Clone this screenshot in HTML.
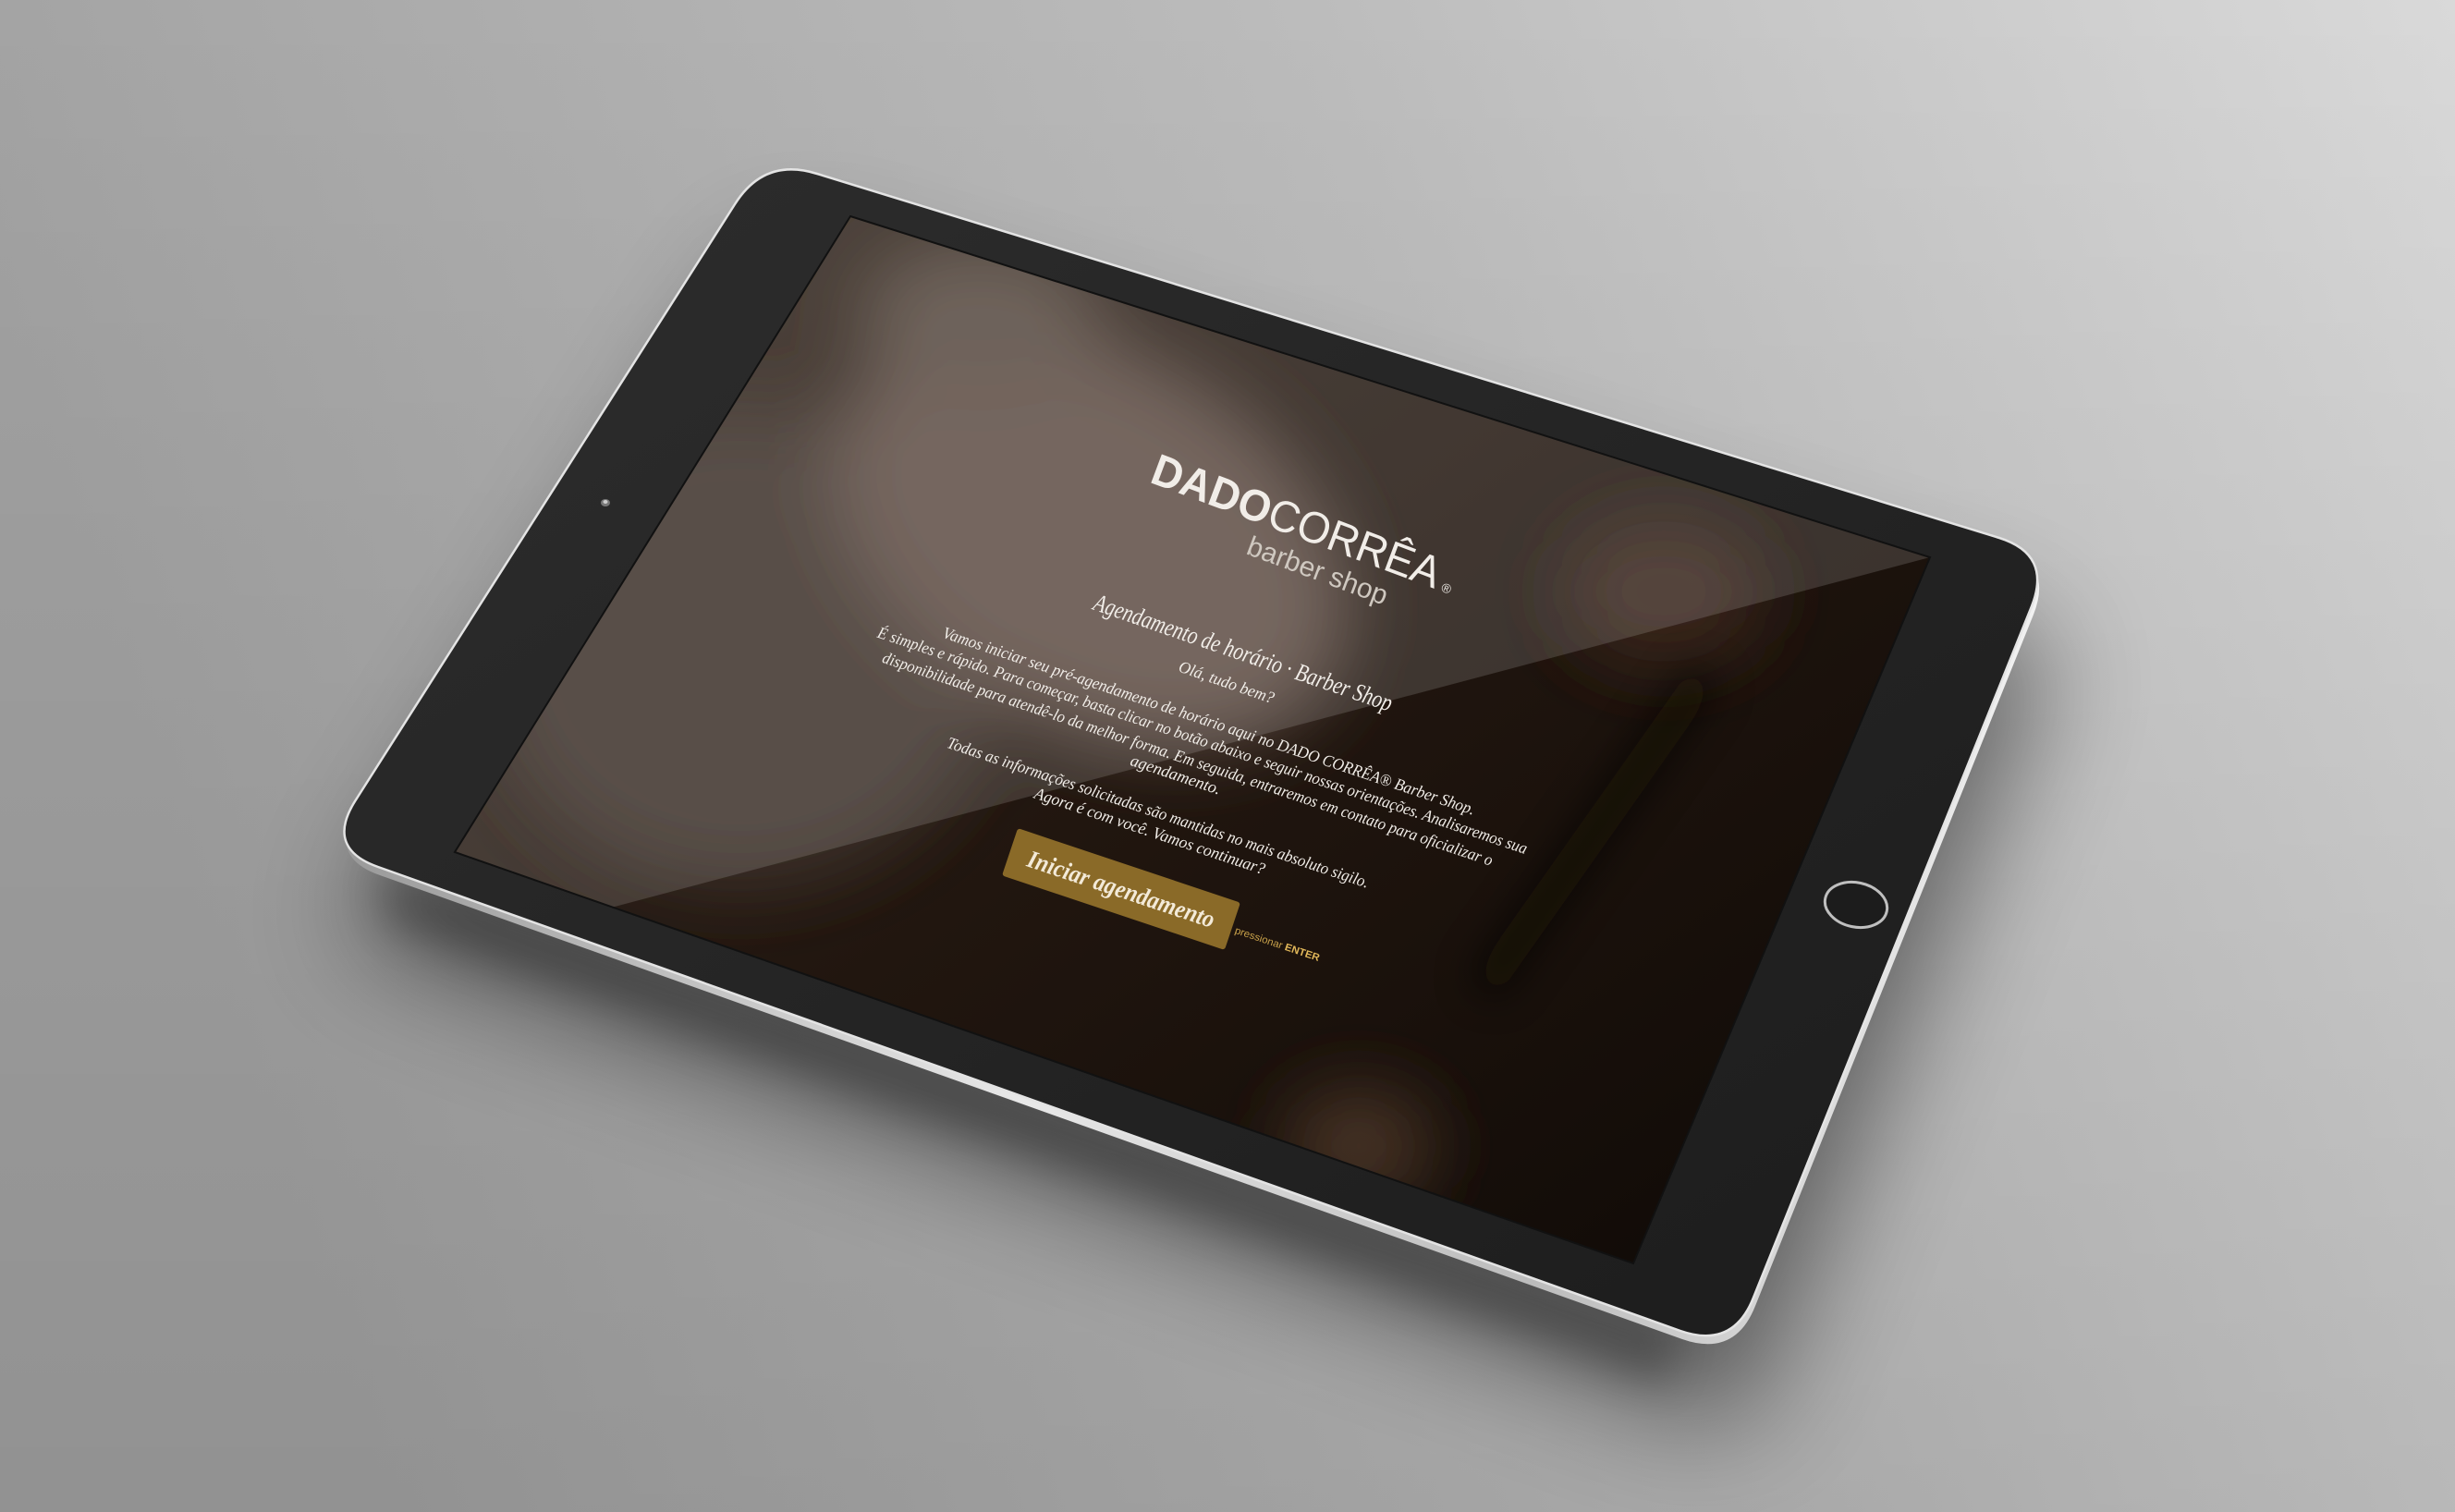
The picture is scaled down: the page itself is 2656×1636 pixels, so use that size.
<!DOCTYPE html>
<html><head><meta charset="utf-8"><style>
html,body{margin:0;padding:0;width:2656px;height:1636px;overflow:hidden;background:#b0b0b0}
svg{display:block}
</style></head><body>
<svg width="2656" height="1636" viewBox="0 0 2656 1636" xmlns="http://www.w3.org/2000/svg">
<defs>
<linearGradient id="bg" x1="0" y1="0.2" x2="1" y2="0">
<stop offset="0" stop-color="#a2a2a2"/><stop offset="0.55" stop-color="#bcbcbc"/><stop offset="1" stop-color="#d9d9d9"/>
</linearGradient>
<linearGradient id="bgv" x1="0" y1="0" x2="0" y2="1">
<stop offset="0" stop-color="#000" stop-opacity="0"/><stop offset="1" stop-color="#000" stop-opacity="0.1"/>
</linearGradient>
<filter id="blur40" filterUnits="userSpaceOnUse" x="0" y="0" width="2656" height="1636"><feGaussianBlur stdDeviation="40"/></filter>
<filter id="blur20" filterUnits="userSpaceOnUse" x="0" y="0" width="2656" height="1636"><feGaussianBlur stdDeviation="22"/></filter>
<filter id="blur60" filterUnits="userSpaceOnUse" x="0" y="0" width="2656" height="1636"><feGaussianBlur stdDeviation="60"/></filter>
<linearGradient id="silver" x1="0" y1="0" x2="1" y2="0">
<stop offset="0" stop-color="#9a9a9a"/><stop offset="0.4" stop-color="#e8e8e8"/><stop offset="0.7" stop-color="#bcbcbc"/><stop offset="1" stop-color="#f2f2f2"/>
</linearGradient>
<linearGradient id="bezel" x1="0" y1="0" x2="1" y2="1">
<stop offset="0" stop-color="#2d2d2d"/><stop offset="1" stop-color="#1c1c1c"/>
</linearGradient>
<linearGradient id="scr" x1="0" y1="0" x2="1" y2="1">
<stop offset="0" stop-color="#33261d"/><stop offset="0.5" stop-color="#21160f"/><stop offset="1" stop-color="#0e0906"/>
</linearGradient>
<clipPath id="sc"><polygon points="920,234 2088,603 1767,1367 492,922"/></clipPath>
</defs>
<rect width="2656" height="1636" fill="url(#bg)"/>
<rect width="2656" height="1636" fill="url(#bgv)"/>

<path d="M884,188 L2163,582 Q2220,600 2198,656 L1897,1404 Q1875,1460 1818,1440 L409,938 Q352,918 384,867 L795,221 Q827,170 884,188 Z" transform="translate(10,95)" fill="#000" opacity="0.45" filter="url(#blur60)"/>
<path d="M1818,1440 L409,938 L420,1000 L1800,1500 Z" fill="#000" opacity="0.25" filter="url(#blur20)"/>

<path d="M884,188 L2163,582 Q2220,600 2198,656 L1897,1404 Q1875,1460 1818,1440 L409,938 Q352,918 384,867 L795,221 Q827,170 884,188 Z" transform="translate(2,9)" fill="url(#silver)"/>
<path d="M884,188 L2163,582 Q2220,600 2198,656 L1897,1404 Q1875,1460 1818,1440 L409,938 Q352,918 384,867 L795,221 Q827,170 884,188 Z" fill="url(#bezel)" stroke="#e4e4e4" stroke-width="2.5"/>

<ellipse cx="655" cy="544" rx="5" ry="4" fill="#777"/><ellipse cx="655" cy="543" rx="2.5" ry="2" fill="#ccc"/>
<ellipse cx="2008" cy="979" rx="34" ry="24" transform="rotate(12 2008 979)" fill="#1c1c1c" stroke="#bfbfbf" stroke-width="3"/>

<g clip-path="url(#sc)">
<rect x="480" y="220" width="1620" height="1160" fill="url(#scr)"/>
<g filter="url(#blur40)">
<ellipse cx="800" cy="700" rx="280" ry="260" fill="#3e3029"/>
<ellipse cx="1180" cy="580" rx="300" ry="200" fill="#5e4e44" transform="rotate(30 1180 580)"/>
<ellipse cx="1060" cy="340" rx="130" ry="80" fill="#574840"/>
<ellipse cx="1470" cy="1240" rx="80" ry="60" fill="#4a3426"/>
<ellipse cx="1800" cy="640" rx="110" ry="80" fill="#3a281c"/>
</g>
<path d="M1830,720 L1860,740 L1620,1080 L1590,1060 Z" fill="#0a0705" opacity="0.7" filter="url(#blur20)"/>
<polygon points="920,234 2088,603 650,985 492,922" fill="#ffffff" opacity="0.14"/>
</g>
<polygon points="920,234 2088,603 1767,1367 492,922" fill="none" stroke="#111" stroke-width="2"/>

<g fill="#f1ede8">
<g transform="translate(1402,566) rotate(20.5)">
<text x="0" y="14" text-anchor="middle" font-family="Liberation Sans, sans-serif" font-size="48" textLength="330" lengthAdjust="spacingAndGlyphs"><tspan font-weight="bold">DADO</tspan><tspan>CORRÊA</tspan></text>
<text x="172" y="14" font-family="Liberation Sans, sans-serif" font-size="14">®</text>
<text x="40" y="50" text-anchor="middle" font-family="Liberation Sans, sans-serif" font-size="30" fill="#cfc8c0" textLength="160" lengthAdjust="spacingAndGlyphs">barber shop</text>
</g>
<g font-family="Liberation Serif, serif" font-style="italic">
<text transform="translate(1345,706) rotate(19)" y="9" text-anchor="middle" font-size="27" textLength="340" lengthAdjust="spacingAndGlyphs">Agendamento de horário · Barber Shop</text>
<text transform="translate(1327,738) rotate(19)" y="6" text-anchor="middle" font-size="18" textLength="108" lengthAdjust="spacingAndGlyphs">Olá, tudo bem?</text>
<text transform="translate(1308,780) rotate(18.5)" y="6" text-anchor="middle" font-size="18" textLength="606" lengthAdjust="spacingAndGlyphs">Vamos iniciar seu pré-agendamento de horário aqui no DADO CORRÊA® Barber Shop.</text>
<text transform="translate(1301,801) rotate(18.5)" y="6" text-anchor="middle" font-size="18" textLength="740" lengthAdjust="spacingAndGlyphs">É simples e rápido. Para começar, basta clicar no botão abaixo e seguir nossas orientações. Analisaremos sua</text>
<text transform="translate(1285,821) rotate(18.5)" y="6" text-anchor="middle" font-size="18" textLength="695" lengthAdjust="spacingAndGlyphs">disponibilidade para atendê-lo da melhor forma. Em seguida, entraremos em contato para oficializar o</text>
<text transform="translate(1272,838) rotate(18.5)" y="6" text-anchor="middle" font-size="18" textLength="102" lengthAdjust="spacingAndGlyphs">agendamento.</text>
<text transform="translate(1253,879) rotate(18.5)" y="6" text-anchor="middle" font-size="18" textLength="480" lengthAdjust="spacingAndGlyphs">Todas as informações solicitadas são mantidas no mais absoluto sigilo.</text>
<text transform="translate(1244,899) rotate(18.5)" y="6" text-anchor="middle" font-size="18" textLength="262" lengthAdjust="spacingAndGlyphs">Agora é com você. Vamos continuar?</text>
</g>
<g transform="translate(1213,962) rotate(18.5)">
<rect x="-127" y="-27" width="254" height="54" rx="3" fill="#8a6a28"/>
<text x="0" y="9" text-anchor="middle" font-family="Liberation Serif, serif" font-style="italic" font-weight="bold" font-size="27" fill="#f3ead8" textLength="212" lengthAdjust="spacingAndGlyphs">Iniciar agendamento</text>
</g>
<text transform="translate(1382,1021) rotate(18.5)" y="4" text-anchor="middle" font-family="Liberation Sans, sans-serif" font-size="11" fill="#c9a24a" textLength="96" lengthAdjust="spacingAndGlyphs">pressionar <tspan font-weight="bold" fill="#e2b85a">ENTER</tspan></text>
</g>
</svg>
</body></html>
